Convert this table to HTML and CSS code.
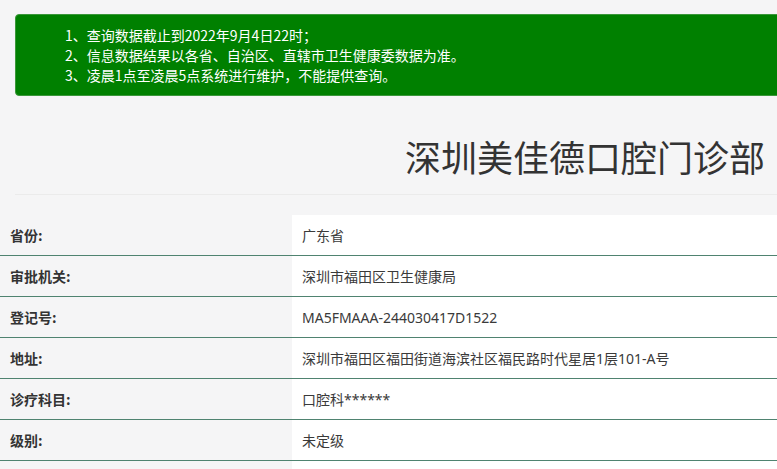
FILE: index.html
```html
<!DOCTYPE html>
<html lang="zh-CN">
<head>
<meta charset="utf-8">
<title>深圳美佳德口腔门诊部</title>
<link rel="stylesheet" href="styles.css">
</head>
<body>
<div class="page">
  <div class="notice">
    <p>1、查询数据截止到2022年9月4日22时；</p>
    <p>2、信息数据结果以各省、自治区、直辖市卫生健康委数据为准。</p>
    <p>3、凌晨1点至凌晨5点系统进行维护，不能提供查询。</p>
  </div>
  <div class="header">
    <h1 class="title">深圳美佳德口腔门诊部</h1>
  </div>
  <div class="info">
    <div class="row"><div class="label">省份:</div><div class="value">广东省</div></div>
    <div class="row"><div class="label">审批机关:</div><div class="value">深圳市福田区卫生健康局</div></div>
    <div class="row"><div class="label">登记号:</div><div class="value">MA5FMAAA-244030417D1522</div></div>
    <div class="row"><div class="label">地址:</div><div class="value">深圳市福田区福田街道海滨社区福民路时代星居1层101-A号</div></div>
    <div class="row"><div class="label">诊疗科目:</div><div class="value">口腔科******</div></div>
    <div class="row"><div class="label">级别:</div><div class="value">未定级</div></div>
    <div class="row"><div class="label">&nbsp;</div><div class="value">&nbsp;</div></div>
  </div>
</div>
</body>
</html>
```

FILE: styles.css
```css
html, body {
  margin: 0;
  padding: 0;
  overflow: hidden;
  background: #f5f5f6;
}
body {
  font-family: "Noto Sans", "Noto Sans CJK SC", sans-serif;
  color: #333;
  font-size: 14px;
}
.page {
  width: 777px;
}
.notice {
  margin: 14px -20px 0 15px;
  padding: 10px 0 10px 49px;
  background: #008000;
  border: 1px solid #3a973a;
  border-radius: 4px;
  color: #fff;
  font-family: "Noto Sans CJK SC", sans-serif;
  font-size: 14px;
  line-height: 20px;
}
.notice p {
  margin: 0;
}
.header {
  margin: 40px 0 0 15px;
  padding: 0 12px 18px 0;
  border-bottom: 1px solid #ebebeb;
  text-align: right;
}
.title {
  margin: 0;
  font-family: "Noto Sans CJK SC", sans-serif;
  font-weight: 400;
  font-size: 36px;
  line-height: 40px;
  color: #333;
}
.info {
  margin-top: 20px;
}
.row {
  display: flex;
  height: 40px;
  border-bottom: 1px solid #4f8370;
}
.label {
  width: 282px;
  padding-left: 10px;
  display: flex;
  align-items: center;
  font-family: "Noto Sans CJK SC", sans-serif;
  font-weight: 700;
  font-size: 14px;
  color: #333;
}
.value {
  flex: 1;
  padding-left: 10px;
  display: flex;
  align-items: center;
  background: #fff;
  font-size: 14px;
  color: #3a3a3a;
}
```
